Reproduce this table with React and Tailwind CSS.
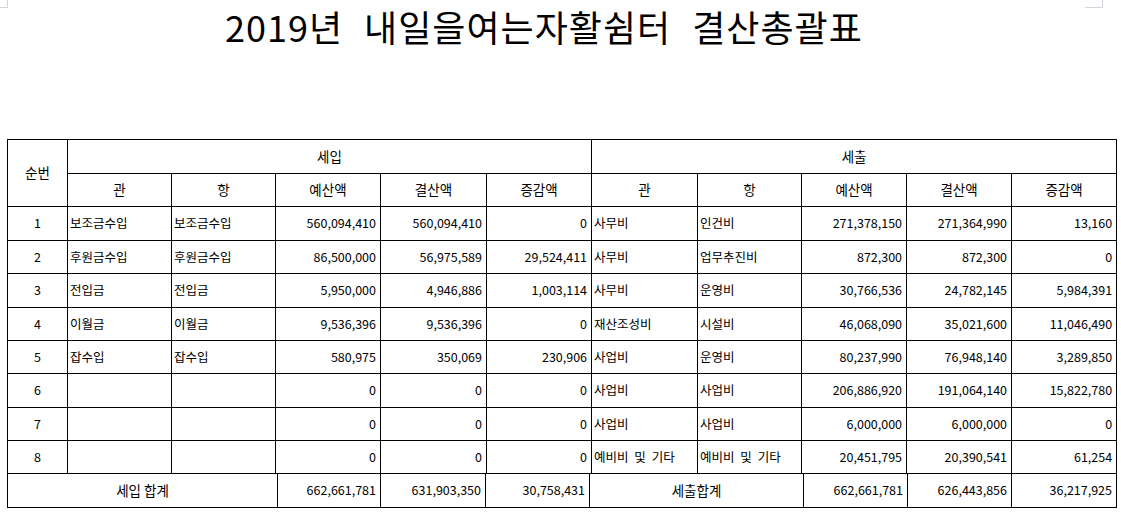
const rows = [
  ["1", "보조금수입", "보조금수입", "560,094,410", "560,094,410", "0", "사무비", "인건비", "271,378,150", "271,364,990", "13,160"],
  ["2", "후원금수입", "후원금수입", "86,500,000", "56,975,589", "29,524,411", "사무비", "업무추진비", "872,300", "872,300", "0"],
  ["3", "전입금", "전입금", "5,950,000", "4,946,886", "1,003,114", "사무비", "운영비", "30,766,536", "24,782,145", "5,984,391"],
  ["4", "이월금", "이월금", "9,536,396", "9,536,396", "0", "재산조성비", "시설비", "46,068,090", "35,021,600", "11,046,490"],
  ["5", "잡수입", "잡수입", "580,975", "350,069", "230,906", "사업비", "운영비", "80,237,990", "76,948,140", "3,289,850"],
  ["6", "", "", "0", "0", "0", "사업비", "사업비", "206,886,920", "191,064,140", "15,822,780"],
  ["7", "", "", "0", "0", "0", "사업비", "사업비", "6,000,000", "6,000,000", "0"],
  ["8", "", "", "0", "0", "0", "예비비 및 기타", "예비비 및 기타", "20,451,795", "20,390,541", "61,254"],
];

const rowHeights = ["h-[34px]", "h-[33px]", "h-[34px]", "h-[33px]", "h-[33px]", "h-[34px]", "h-[33px]", "h-[33px]"];
const colWidths = ["w-[60px]", "w-[104px]", "w-[104px]", "w-[105px]", "w-[106px]", "w-[105px]", "w-[106px]", "w-[104px]", "w-[105px]", "w-[105px]", "w-[105px]"];
const textCols = [1, 2, 6, 7];

const cell = "border border-black p-0 align-middle";
const head = cell + " text-center text-[13.5px] font-normal";

function DataCell({ value, index }) {
  if (index === 0) return <td className={cell + " text-center"}>{value}</td>;
  if (textCols.includes(index)) return <td className={cell + " text-left pl-[2px] whitespace-nowrap [word-spacing:3px]"}>{value}</td>;
  return <td className={cell + " text-right pr-[4px]"}>{value}</td>;
}

export default function App() {
  return (
    <div className="w-[1121px] h-[513px] overflow-hidden bg-white text-black font-['Noto_Sans_CJK_KR','Noto_Sans',sans-serif]">
      <div className="flex h-[8px]">
        <div className="w-[8px] h-[8px] border-r border-b border-gray-300"></div>
        <div className="ml-auto mr-[18px] w-[18px] h-[8px] border-r border-b border-gray-300"></div>
      </div>

      <h1 className="-mt-[1px] h-[132px] pl-[225px] text-[36px] leading-[38px] font-normal tracking-[1px] [word-spacing:12px] whitespace-nowrap">
        2019년 내일을여는자활쉼터 결산총괄표
      </h1>

      <table className="ml-[7px] w-[1110px] table-fixed border-collapse text-[12.5px] leading-none">
        <colgroup>
          {colWidths.map((w, i) => (
            <col key={i} className={w} />
          ))}
        </colgroup>
        <thead>
          <tr className="h-[34px]">
            <th rowSpan={2} className={head}>순번</th>
            <th colSpan={5} className={head}>세입</th>
            <th colSpan={5} className={head}>세출</th>
          </tr>
          <tr className="h-[33px]">
            <th className={head}>관</th>
            <th className={head}>항</th>
            <th className={head}>예산액</th>
            <th className={head}>결산액</th>
            <th className={head}>증감액</th>
            <th className={head}>관</th>
            <th className={head}>항</th>
            <th className={head}>예산액</th>
            <th className={head}>결산액</th>
            <th className={head}>증감액</th>
          </tr>
        </thead>
        <tbody>
          {rows.map((r, i) => (
            <tr key={i} className={rowHeights[i]}>
              {r.map((v, j) => (
                <DataCell key={j} value={v} index={j} />
              ))}
            </tr>
          ))}
        </tbody>
      </table>

      <table className="ml-[7px] w-[1110px] table-fixed border-collapse text-[12.5px] leading-none">
        <colgroup>
          <col className="w-[270px]" />
          <col className="w-[103px]" />
          <col className="w-[105px]" />
          <col className="w-[104px]" />
          <col className="w-[214px]" />
          <col className="w-[104px]" />
          <col className="w-[104px]" />
          <col className="w-[105px]" />
        </colgroup>
        <tbody>
          <tr className="h-[33px]">
            <td className={cell + " border-t-0 text-center text-[13.5px]"}>세입 합계</td>
            <td className={cell + " border-t-0 text-right pr-[4px]"}>662,661,781</td>
            <td className={cell + " border-t-0 text-right pr-[4px]"}>631,903,350</td>
            <td className={cell + " border-t-0 text-right pr-[4px]"}>30,758,431</td>
            <td className={cell + " border-t-0 text-center text-[13.5px]"}>세출합계</td>
            <td className={cell + " border-t-0 text-right pr-[4px]"}>662,661,781</td>
            <td className={cell + " border-t-0 text-right pr-[4px]"}>626,443,856</td>
            <td className={cell + " border-t-0 text-right pr-[4px]"}>36,217,925</td>
          </tr>
        </tbody>
      </table>
    </div>
  );
}
